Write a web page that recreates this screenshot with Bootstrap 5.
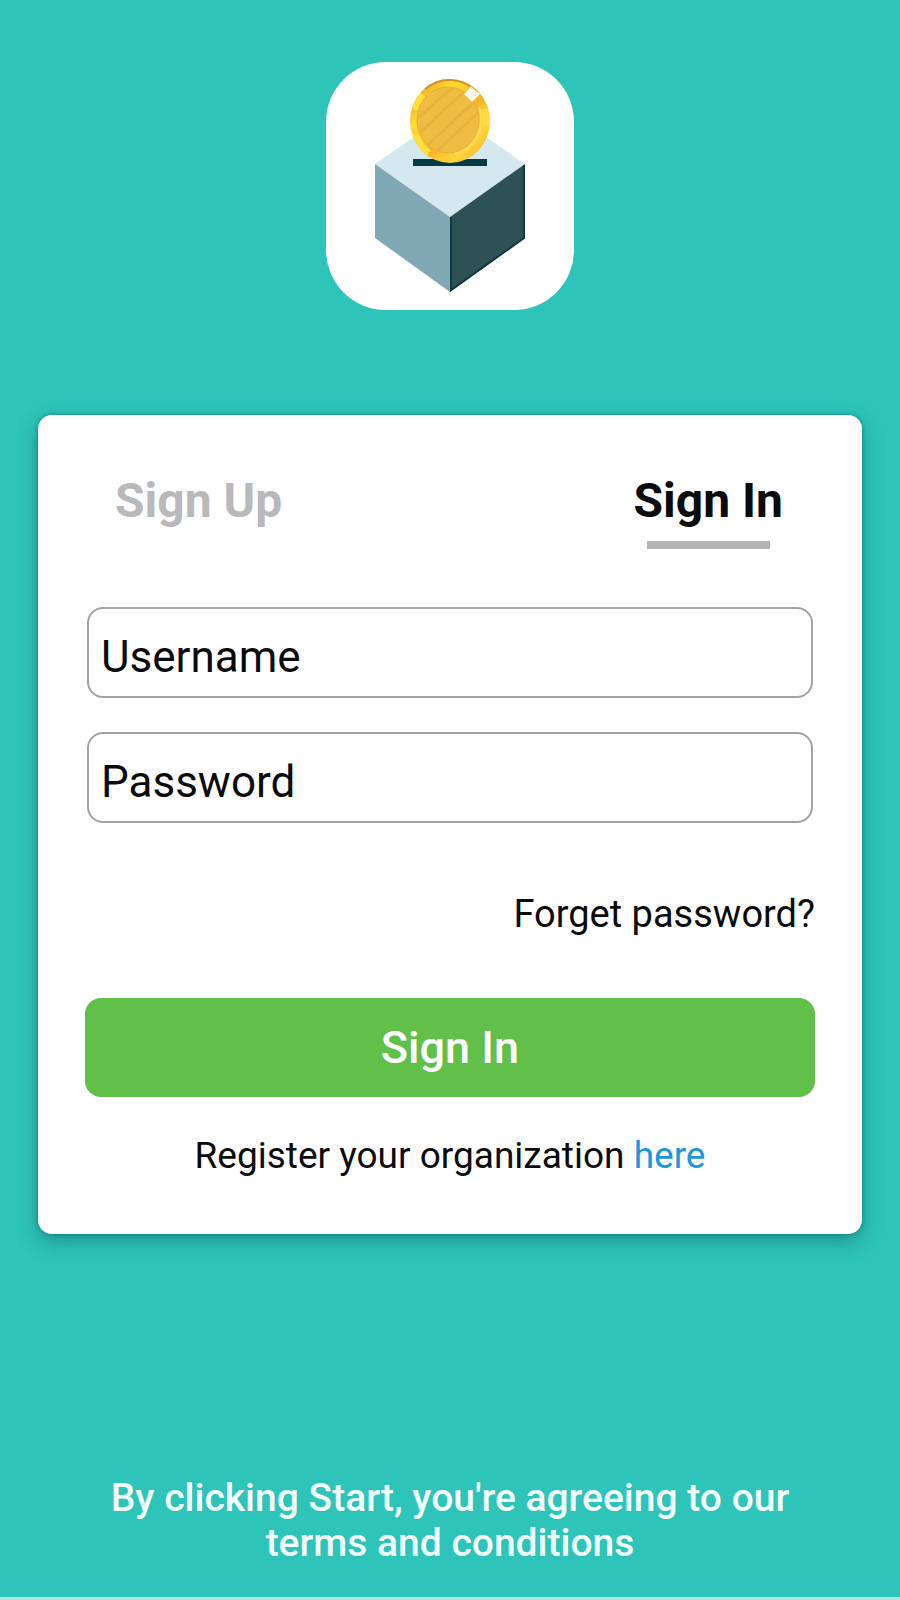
<!DOCTYPE html>
<html lang="en">
<head>
<meta charset="utf-8">
<meta name="viewport" content="width=device-width, initial-scale=1">
<title>Sign In</title>
<link href="https://cdn.jsdelivr.net/npm/bootstrap@5.3.0/dist/css/bootstrap.min.css" rel="stylesheet">
<style>
  body { background: #2ec4b9; font-family: Roboto, "Liberation Sans", sans-serif; color: #0b0b0d; }
  .screen { border-bottom: 3px solid #a9e8dd; padding: 62px 38px 31px; }
  .logo { width: 248px; height: 248px; border-radius: 60px; }
  .panel { margin-top: 105px; border: 0; border-radius: 14px; padding: 56px 47px 54px;
    box-shadow: 0 0 4px rgba(0, 100, 95, .6), 0 8px 20px rgba(0, 70, 70, .36); }
  .tabs { padding: 0 32px 0 30px; }
  .tab-link { font-size: 48px; line-height: 60px; font-weight: 700; color: #b9b9bc; text-decoration: none; }
  .tab-link.active { color: #0b0b0d; }
  .tab-link.active::after { content: ""; display: block; height: 8px; margin: 10px 13px 0; background: #b3b3b5; }
  .fields { margin-top: 58px; gap: 34px; padding: 0 2px; }
  .form-floating > .field { height: 91px; border: 2px solid #a3a3a3; border-radius: 16px; padding: 24px 12px 4px; font-size: 44px; line-height: 60px; color: #0b0b0d; }
  .form-floating > .field-label { padding: 18px 12px 8px; border: 2px solid transparent; font-size: 44px; line-height: 60px; color: #0b0b0d; }
  .note { font-size: 38px; line-height: 48px; color: #0b0b0d; text-decoration: none; }
  .forgot { margin-top: 67px; }
  .submit { margin-top: 60px; height: 99px; border: 0; border-radius: 16px; background: #61bf4a; color: #fff; font-size: 45px; font-weight: 500; line-height: 60px; }
  .register { margin-top: 35px; font-size: 37px; }
  .register a { color: #1b96dc; text-decoration: none; }
  .terms { font-size: 39px; line-height: 45px; font-weight: 500; color: #f4fffd; max-width: 720px; }
</style>
</head>
<body>
<main class="screen min-vh-100 d-flex flex-column">
  <svg class="logo bg-white align-self-center flex-shrink-0" viewBox="0 0 248 248" role="img" aria-label="Coin box logo">
    <defs>
      <linearGradient id="rim" x1="0" y1="0" x2="1" y2="1">
        <stop offset="0" stop-color="#dea02b"/><stop offset=".15" stop-color="#f0b62c"/>
        <stop offset=".3" stop-color="#ffdc30"/><stop offset=".55" stop-color="#f5b42c"/>
        <stop offset=".75" stop-color="#ffd63a"/><stop offset="1" stop-color="#eea527"/>
      </linearGradient>
      <clipPath id="face"><ellipse cx="122" cy="58" rx="31" ry="33"/></clipPath>
    </defs>
    <path fill="#d5e8ef" d="M124 50 199 102 124 155 49 102Z"/>
    <path fill="#81a8b5" d="M49 102 124 155V230L49 176Z"/>
    <path fill="#2d5155" d="M199 102 124 155V230L199 176Z"/>
    <path fill="none" stroke="#133a42" stroke-width="2" d="M125 155V228L198 176V103"/>
    <path fill="#063a45" d="M87 97h74v7H87z"/>
    <ellipse cx="124" cy="59" rx="40" ry="42" fill="url(#rim)"/>
    <path fill="none" stroke="#d1912b" stroke-width="2" d="M99 27A39 41 0 0 1 150 29"/>
    <path fill="none" stroke="#ffe03a" stroke-width="6" d="M90 72A36 38 0 0 0 103 91M89 48A36 38 0 0 1 97 33M158 47A36 38 0 0 1 160 64"/>
    <ellipse cx="122" cy="58" rx="31" ry="33" fill="#efbd43"/>
    <g clip-path="url(#face)" stroke="#dfa83b" stroke-width="3" opacity=".5">
      <path d="M86 61 133 20M91 73 151 18M98 86 155 34M108 92 161 42"/>
    </g>
    <ellipse cx="122" cy="58" rx="31" ry="33" fill="none" stroke="#e8ad35" stroke-width="1"/>
    <path fill="none" stroke="#ffdc62" stroke-width="2" d="M153 45A33 35 0 0 1 128 92"/>
    <path fill="#fffbe8" d="M145 24 149 28 154 32 150 36 146 40 142 36 138 32 142 28Z"/>
  </svg>

  <section class="card panel">
    <nav class="tabs d-flex justify-content-between align-items-start" aria-label="Account">
      <a class="tab-link" href="#signup">Sign Up</a>
      <a class="tab-link active" href="#signin" aria-current="page">Sign In</a>
    </nav>
    <form class="d-flex flex-column">
      <div class="fields d-flex flex-column">
        <div class="form-floating">
          <input class="form-control field" id="username" type="text" placeholder=" ">
          <label class="field-label" for="username">Username</label>
        </div>
        <div class="form-floating">
          <input class="form-control field" id="password" type="password" placeholder=" ">
          <label class="field-label" for="password">Password</label>
        </div>
      </div>
      <a class="note forgot align-self-end" href="#forgot">Forget password?</a>
      <button class="btn submit w-100" type="submit">Sign In</button>
    </form>
    <p class="note register text-center mb-0">Register your organization <a href="#register">here</a></p>
  </section>

  <footer class="terms text-center mx-auto mt-auto">By clicking Start, you're agreeing to our terms and conditions</footer>
</main>
<script src="https://cdn.jsdelivr.net/npm/bootstrap@5.3.0/dist/js/bootstrap.bundle.min.js"></script>
</body>
</html>
